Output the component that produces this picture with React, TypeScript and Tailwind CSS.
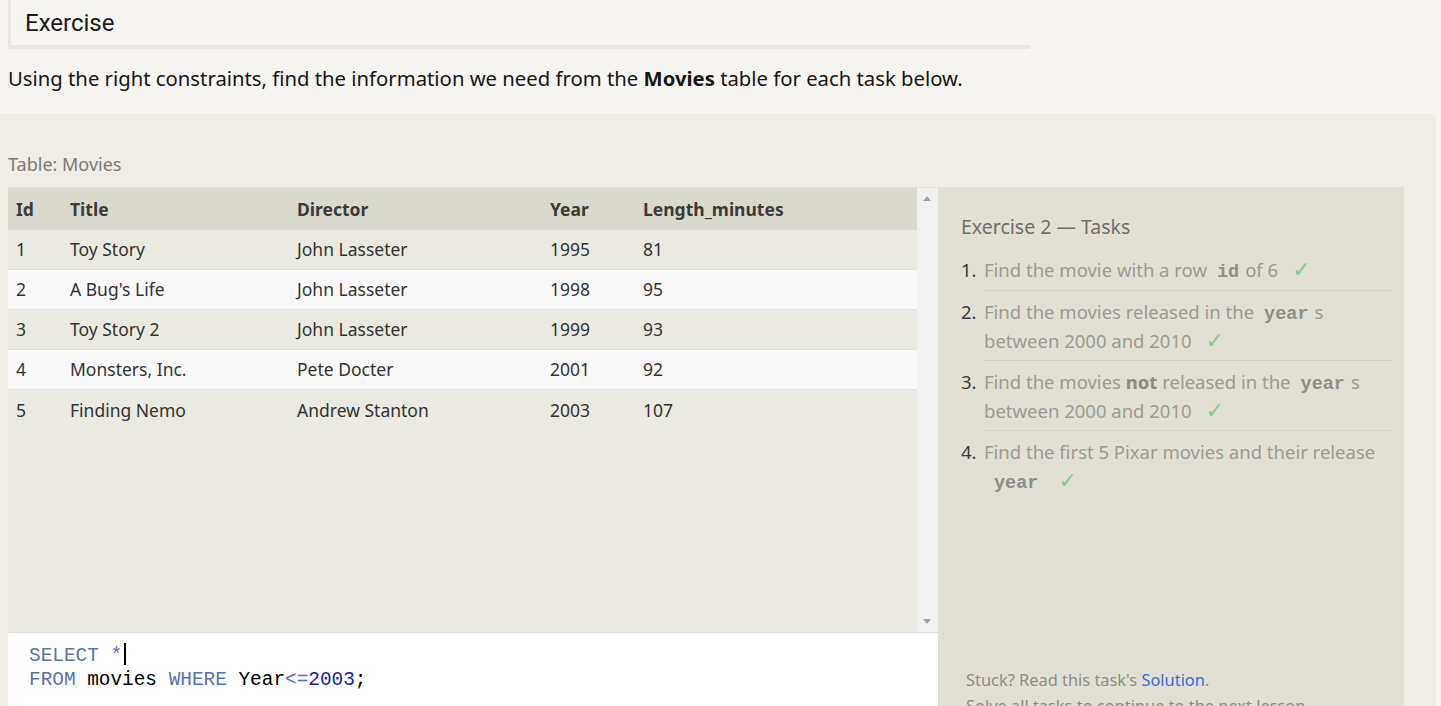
import { Fragment } from "react";

const MOVIES = [
  { id: 1, title: "Toy Story", director: "John Lasseter", year: 1995, length: 81 },
  { id: 2, title: "A Bug's Life", director: "John Lasseter", year: 1998, length: 95 },
  { id: 3, title: "Toy Story 2", director: "John Lasseter", year: 1999, length: 93 },
  { id: 4, title: "Monsters, Inc.", director: "Pete Docter", year: 2001, length: 92 },
  { id: 5, title: "Finding Nemo", director: "Andrew Stanton", year: 2003, length: 107 },
];

const COLS = "grid grid-cols-[54px_227px_253px_93px_1fr]";

function Code({ children }: { children: string }) {
  return (
    <code className="ml-[10px] mr-[6px] font-['Liberation_Mono',monospace] text-[18.5px] font-bold leading-none text-[#8d8d8a]">
      {children}
    </code>
  );
}

function Check() {
  return <span className="ml-[14px] font-['DejaVu_Sans',sans-serif] text-[22px] leading-none text-[#84cc90]">✓</span>;
}

const TASKS = [
  <Fragment key="1">
    Find the movie with a row<Code>id</Code>of 6<Check />
  </Fragment>,
  <Fragment key="2">
    Find the movies released in the<Code>year</Code>s between 2000 and 2010<Check />
  </Fragment>,
  <Fragment key="3">
    Find the movies <b className="text-[#8a8985]">not</b> released in the<Code>year</Code>s between 2000 and 2010
    <Check />
  </Fragment>,
  <Fragment key="4">
    Find the first 5 Pixar movies and their release <Code>year</Code>
    <Check />
  </Fragment>,
];

export default function App() {
  return (
    <div className="h-[706px] overflow-hidden bg-[#f6f5f1] font-['Noto_Sans',sans-serif]">
      <div className="px-2">
        <div className="w-[1022px] h-[49px] border-l-[3px] border-b-[4px] border-[#eae8de] pl-[14px] pt-[6px]">
          <h2 className="font-['Roboto',sans-serif] text-[24px] leading-[34px] text-[#1a1a1a]">Exercise</h2>
        </div>
        <p className="mt-[14px] whitespace-nowrap text-[20.3px] leading-[30px] text-[#161616]">
          Using the right constraints, find the information we need from the <b>Movies</b> table for each task below.
        </p>
      </div>

      <div className="mt-[21px] mr-[5px] h-[600px] rounded-tr-[6px] bg-[#f0ede6] pt-[38px]">
        <p className="px-2 text-[18px] leading-[24px] text-[#7a7a76]">Table: Movies</p>
        <div className="mt-[11px] ml-2 flex w-[1396px] items-stretch">
          <div className="w-[930px] flex flex-col">
            <div className="flex h-[445px] border-t border-[#e2e1da]">
              <div className="flex-1 bg-[#eae9e2] text-[17.5px] text-[#333]">
                <div className={`${COLS} h-[42px] items-center bg-[#dad9ce] font-bold text-[#3a3a3a]`}>
                  <span className="pl-2">Id</span>
                  <span className="pl-2">Title</span>
                  <span className="pl-2">Director</span>
                  <span className="pl-2">Year</span>
                  <span className="pl-2">Length_minutes</span>
                </div>
                {MOVIES.map((m, i) => (
                  <div
                    key={m.id}
                    className={`${COLS} h-[40px] items-center ${i < MOVIES.length - 1 ? "border-b border-[#e1e0da]" : ""} ${i % 2 === 1 ? "bg-[#f9f9f9]" : "bg-[#eae9e2]"}`}
                  >
                    <span className="pl-2">{m.id}</span>
                    <span className="pl-2">{m.title}</span>
                    <span className="pl-2">{m.director}</span>
                    <span className="pl-2">{m.year}</span>
                    <span className="pl-2">{m.length}</span>
                  </div>
                ))}
              </div>
              <div className="relative w-[21px] bg-[#f1f1f1]">
                <span className="absolute left-[6px] top-[8px] h-0 w-0 border-x-[4px] border-b-[5px] border-x-transparent border-b-[#a3a3a3]" />
                <span className="absolute left-[6px] bottom-[8px] h-0 w-0 border-x-[4px] border-t-[5px] border-x-transparent border-t-[#a3a3a3]" />
              </div>
            </div>
            <div className="flex-1 border-t border-[#dedede] bg-white pl-[21px] pt-[6px] font-['Liberation_Mono',monospace] text-[19.4px] leading-[24px]">
              <div>
                <span className="text-[#5573b2]">SELECT</span> <span className="text-[#5573b2]">*</span>
                <span className="ml-[2px] inline-block h-[22px] w-[2px] translate-y-[4px] bg-black" />
              </div>
              <div>
                <span className="text-[#5573b2]">FROM</span> <span className="text-black">movies</span>{" "}
                <span className="text-[#5573b2]">WHERE</span> <span className="text-black">Year</span>
                <span className="text-[#4f6bd8]">&lt;=</span>
                <span className="text-[#1c1ca8]">2003</span>
                <span className="text-black">;</span>
              </div>
            </div>
          </div>

          <div className="w-[466px] bg-[#e2e0d4] pl-[23px] pr-[11px] pt-[26px]">
            <h3 className="text-[19.5px] leading-[28px] text-[#6f6f6b]">Exercise 2 — Tasks</h3>
            <ol className="mt-[14px] text-[18.5px] leading-[29px] text-[#9b9a95]">
              {TASKS.map((content, i) => (
                <li key={i} className="flex">
                  <span className={`w-[23px] shrink-0 text-[#3a3a3a] ${i === 0 ? "" : "pt-[6px]"}`}>{i + 1}.</span>
                  <div
                    className={`flex-1 ${i === 0 ? "pb-[6px]" : "pb-[5px] pt-[6px]"} ${i < TASKS.length - 1 ? "border-b border-[#d3d1c5]" : ""}`}
                  >
                    {content}
                  </div>
                </li>
              ))}
            </ol>
            <div className="mt-[168px] pl-[5px] text-[16.4px] leading-[24px] text-[#8f8d87]">
              <p>
                Stuck? Read this task's <span className="text-[#2f6fe0]">Solution</span>.
              </p>
              <p className="mt-[2px]">Solve all tasks to continue to the next lesson.</p>
            </div>
          </div>
        </div>
      </div>
    </div>
  );
}
